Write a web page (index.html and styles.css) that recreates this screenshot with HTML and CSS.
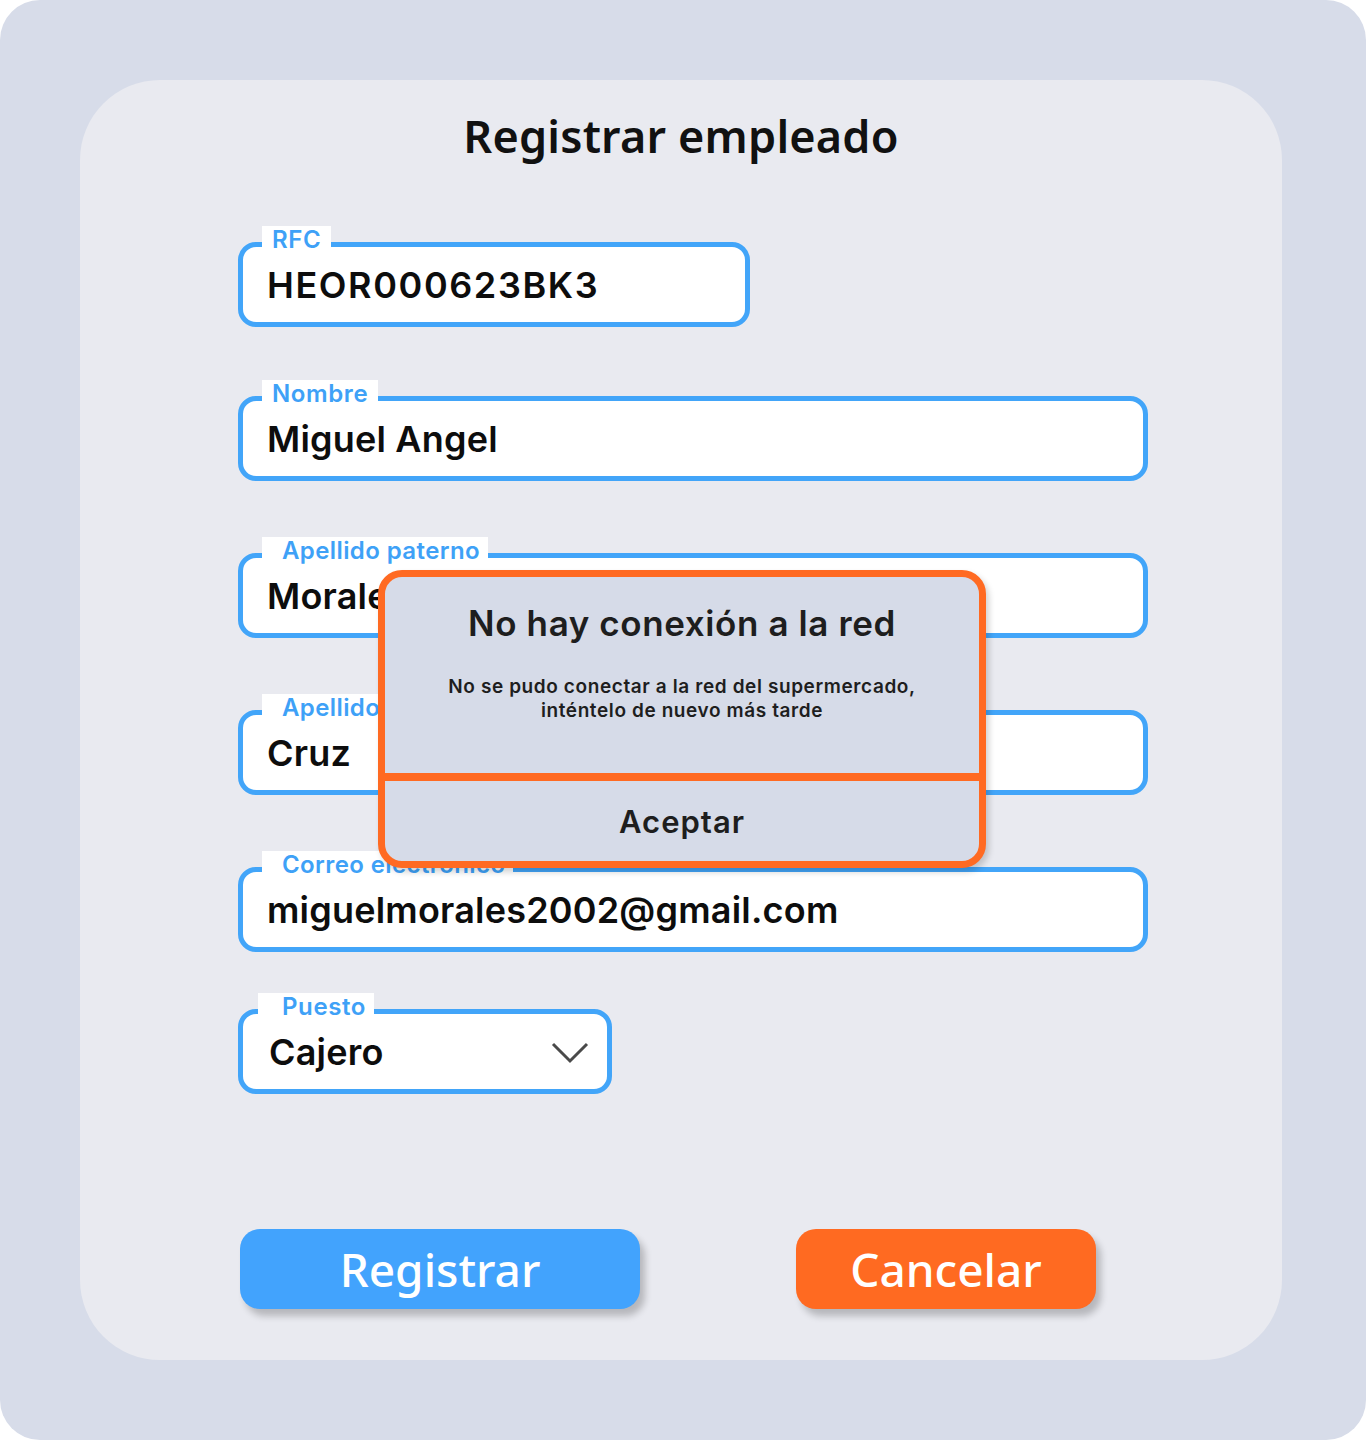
FILE: index.html
```html
<!DOCTYPE html>
<html lang="es">
<head>
    <meta charset="UTF-8">
    <meta name="viewport" content="width=device-width, initial-scale=1.0">
    <title>Registrar empleado</title>
    <link rel="stylesheet" href="styles.css">
</head>
<body>

<div class="frame">
    <div class="card">
        <h1 class="title">Registrar empleado</h1>

        <!-- Form fields -->
        <div class="form">
            <div class="field field-short">
                <span class="field-label">RFC</span>
                <div class="field-value">HEOR000623BK3</div>
            </div>
            <div class="field">
                <span class="field-label">Nombre</span>
                <div class="field-value">Miguel Angel</div>
            </div>
            <div class="field">
                <span class="field-label label-wide">Apellido paterno</span>
                <div class="field-value">Morales</div>
            </div>
            <div class="field">
                <span class="field-label label-wide">Apellido materno</span>
                <div class="field-value">Cruz</div>
            </div>
            <div class="field">
                <span class="field-label label-wide">Correo electrónico</span>
                <div class="field-value">miguelmorales2002@gmail.com</div>
            </div>
            <div class="field field-select">
                <span class="field-label label-select">Puesto</span>
                <div class="field-value">Cajero</div>
                <svg class="chevron" width="40" height="24" viewBox="0 0 40 24">
                    <polyline points="2,3 19,20 36,3" fill="none" stroke="#4a4a4a" stroke-width="3"/>
                </svg>
            </div>
        </div>

        <!-- Buttons -->
        <div class="actions">
            <button class="btn btn-register">Registrar</button>
            <button class="btn btn-cancel">Cancelar</button>
        </div>

        <!-- Error dialog -->
        <div class="dialog">
            <div class="dialog-body">
                <h2 class="dialog-title">No hay conexión a la red</h2>
                <p class="dialog-text">No se pudo conectar a la red del supermercado,<br>inténtelo de nuevo más tarde</p>
            </div>
            <div class="dialog-footer">Aceptar</div>
        </div>
    </div>
</div>

</body>
</html>
```

FILE: styles.css
```css
body {
    margin: 0;
    background-color: #ffffff;
    font-family: "Inter", "Noto Sans", sans-serif;
}
/* Outer frame */
.frame {
    width: 1366px;
    height: 1440px;
    box-sizing: border-box;
    padding: 80px 84px 80px 80px;
    background-color: #d7dce9;
    border-radius: 40px;
}
/* Main card */
.card {
    position: relative;
    height: 1280px;
    box-sizing: border-box;
    padding-top: 28px;
    background-color: #e9eaf0;
    border-radius: 80px;
}
.title {
    margin: 0;
    text-align: center;
    font-family: "Noto Sans", sans-serif;
    font-size: 45px;
    font-weight: 600;
    line-height: 56px;
    letter-spacing: 0.2px;
    color: #111;
}
/* Form */
.form {
    display: flex;
    flex-direction: column;
    gap: 72px;
    padding: 0 134px 0 158px;
    margin-top: 78px;
}
.field {
    position: relative;
    display: flex;
    align-items: center;
    height: 85px;
    box-sizing: border-box;
    border: 5px solid #42a5f9;
    border-radius: 18px;
    background-color: #fff;
    padding: 0 24px 0;
}
.field-short {
    width: 512px;
    margin-bottom: -3px;
}
.field-select {
    width: 374px;
    margin-top: -15px;
    justify-content: space-between;
    padding-left: 26px;
}
.field-label {
    position: absolute;
    top: -21px;
    left: 19px;
    padding: 0 10px;
    background-color: #fff;
    color: #3ea1f7;
    font-size: 24px;
    font-weight: 600;
    line-height: 28px;
    letter-spacing: 0.6px;
}
.label-wide {
    padding: 0 8px 0 20px;
    letter-spacing: 0.4px;
}
.label-select {
    left: 15px;
    padding: 0 8px 0 24px;
}
.field-value {
    font-size: 36px;
    font-weight: 600;
    letter-spacing: 0.2px;
    color: #0d0d0d;
}
.field-short .field-value {
    letter-spacing: 1.6px;
}
.chevron {
    margin-right: -8px;
    margin-top: 2px;
}
/* Buttons */
.actions {
    display: flex;
    gap: 156px;
    padding-left: 160px;
    margin-top: 135px;
}
.btn {
    height: 80px;
    border: none;
    border-radius: 20px;
    color: #fff;
    font-family: "Noto Sans", sans-serif;
    font-size: 46px;
    font-weight: 500;
    box-shadow: 5px 7px 7px rgba(0, 0, 0, 0.22);
    cursor: pointer;
}
.btn-register {
    width: 400px;
    background-color: #42a3fd;
}
.btn-cancel {
    width: 300px;
    background-color: #ff6a21;
}
/* Dialog overlay */
.dialog {
    position: absolute;
    left: 298px;
    top: 490px;
    width: 608px;
    height: 298px;
    box-sizing: border-box;
    display: flex;
    flex-direction: column;
    border: 7px solid #ff6a22;
    border-radius: 24px;
    background-color: #d6dbe8;
    box-shadow: 3px 4px 6px rgba(0, 0, 0, 0.18);
    overflow: hidden;
}
.dialog-body {
    height: 196px;
    border-bottom: 8px solid #ff6a22;
    text-align: center;
    color: #1e1e1e;
}
.dialog-title {
    margin: 26px 0 0;
    font-size: 35px;
    font-weight: 600;
    line-height: 40px;
    letter-spacing: 0.6px;
}
.dialog-text {
    margin: 32px 0 0;
    font-size: 19px;
    font-weight: 600;
    line-height: 24px;
    letter-spacing: 0.6px;
}
.dialog-footer {
    flex: 1;
    display: flex;
    align-items: center;
    justify-content: center;
    color: #1e1e1e;
    font-size: 31px;
    font-weight: 600;
    letter-spacing: 1px;
}
```
